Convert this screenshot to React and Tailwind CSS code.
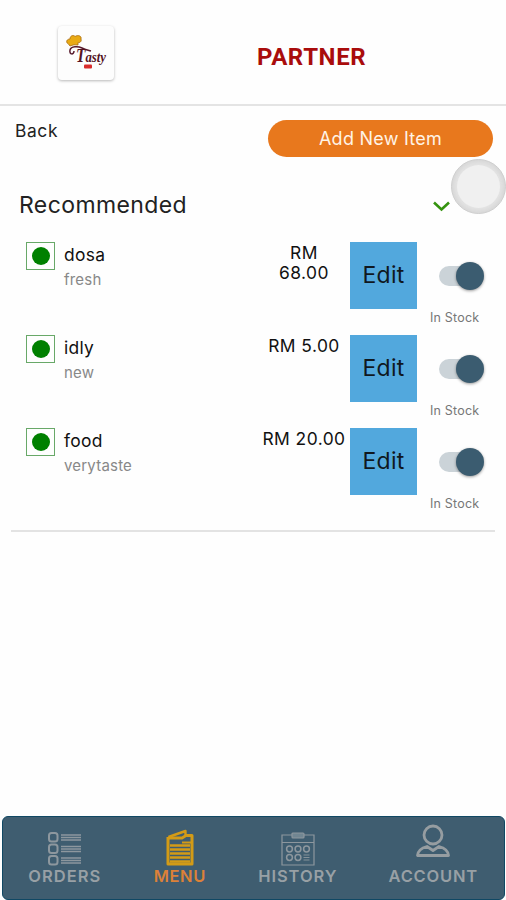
import React from "react";

const items = [
  { name: "dosa", note: "fresh", price: "RM 68.00", priceWidth: "w-[54px] mr-[19px]" },
  { name: "idly", note: "new", price: "RM 5.00", priceWidth: "w-[92px]" },
  { name: "food", note: "verytaste", price: "RM 20.00", priceWidth: "w-[92px]" },
];

function Logo() {
  return (
    <div className="ml-[58px] mt-[26px] h-[54px] w-[56px] rounded-[4px] bg-[#fdfdfd] shadow-[0_1px_3px_rgba(0,0,0,0.28)]">
      <svg viewBox="0 0 56 54" className="h-[54px] w-[56px]">
        <path d="M12 20 L10 17.500 C8 17 8 13 12 13 C12 9 16 9 17 10.500 C20 8.500 24 10 23 13 C24 16 21 17 20 16.500 L20 19 Q16 18 12 20 Z" fill="#e9aa13" stroke="#a8690e" strokeWidth="0.800" />
        <path d="M16 25 C16 29 11 29 12 24 C13 20 20 20 24 22 C28 24 30 24 33 25" fill="none" stroke="#571a2c" strokeWidth="1.500" />
        <text x="18" y="36" fontFamily="Liberation Serif, serif" fontSize="15" fontStyle="italic" fontWeight="700" fill="#55131f" textLength="30" lengthAdjust="spacingAndGlyphs"><tspan fontSize="18">T</tspan>asty</text>
        <rect x="26" y="38.500" width="8" height="4" rx="1" fill="#d92c2c" />
      </svg>
    </div>
  );
}

function Toggle() {
  return (
    <div className="flex h-[28px] w-[45px] items-center rounded-full">
      <div className="h-[20px] w-[32px] rounded-full bg-[#cbd3d8]" />
      <div className="-ml-[15px] h-[28px] w-[28px] shrink-0 rounded-full bg-[#3b5c70] shadow-[0_1px_3px_rgba(0,0,0,0.4)]" />
    </div>
  );
}

function Item({ item }) {
  return (
    <div className="flex h-[93px] items-start">
      <div className="ml-[26px] flex h-[28px] w-[29px] shrink-0 items-center justify-center border border-[#68a868]">
        <div className="h-[18px] w-[18px] rounded-full bg-[#008000]" />
      </div>
      <div className="ml-[9px] flex-1">
        <div className="mt-px h-[24px] text-[17.4px] leading-[24px] tracking-[0.3px] text-[#111]">{item.name}</div>
        <div className="mt-[3px] text-[15px] leading-[20px] tracking-[0.2px] text-[#888]">{item.note}</div>
      </div>
      <div className={`mt-px whitespace-normal text-center text-[17.4px] leading-[20px] tracking-[0.45px] text-[#111] ${item.priceWidth}`}>{item.price}</div>
      <div className="flex h-[67px] w-[67px] shrink-0 items-center justify-center bg-[#52a8dd] text-[23px] tracking-[0.2px] text-[#10181f]">Edit</div>
      <div className="w-[89px] pl-[13px] pt-[19.5px]">
        <div className="pl-[9px]"><Toggle /></div>
        <div className="mt-[19px] text-[12.5px] leading-[18px] tracking-[0.2px] text-[#777]">In Stock</div>
      </div>
    </div>
  );
}

function OrdersIcon() {
  return (
    <svg viewBox="0 0 34 34" className="h-[34px] w-[34px]" fill="none" stroke="#8d979e">
      {[1, 12.5, 24].map((y) => (
        <g key={y}>
          <rect x="1" y={y} width="8.500" height="8.500" rx="2.500" strokeWidth="2" />
          <path d={`M13 ${y + 2}h20M13 ${y + 4.5}h20M13 ${y + 7}h20`} strokeWidth="1.700" />
        </g>
      ))}
    </svg>
  );
}

function MenuIcon() {
  return (
    <svg viewBox="0 0 28 38" className="h-[38px] w-[28px]" fill="none" stroke="#d39b16">
      <path d="M2.500 9 L19.500 3 V8" strokeWidth="2.400" strokeLinejoin="round" />
      <path d="M20 7.500 H26 V36 H2 V9" strokeWidth="3" strokeLinejoin="round" />
      <path d="M2 10 H16 L20 7.500" strokeWidth="2.800" />
      <path d="M16 14.500 H25" strokeWidth="2" />
      <path d="M4 17.500 H24 M4 21.500 H24 M4 25.500 H24 M4 29.500 H24 M4 33.500 H24" strokeWidth="2.500" />
    </svg>
  );
}

function HistoryIcon() {
  return (
    <svg viewBox="0 0 34 34" className="h-[34px] w-[34px]" fill="none" stroke="#8d979e" strokeWidth="1.200">
      <path d="M11 3H1V33H33V3H23M1 10.500H33" />
      <rect x="11" y="1" width="12" height="5" rx="1" fill="#718692" />
      {[8.5, 17, 25.5].map((x) => <circle key={x} cx={x} cy="17" r="2.900" strokeWidth="1.500" />)}
      <circle cx="8.500" cy="25.500" r="2.900" strokeWidth="1.500" />
      <circle cx="17" cy="25.500" r="2.900" strokeWidth="1.500" />
      <path d="M22.500 23h6M22.500 25.500h6M22.500 28h6" strokeWidth="0.900" />
    </svg>
  );
}

function AccountIcon() {
  return (
    <svg viewBox="0 0 36 34" className="h-[34px] w-[36px]" fill="none" stroke="#969da1" strokeWidth="2.800" strokeLinejoin="round">
      <circle cx="18" cy="11" r="9" />
      <path d="M12 22.500 C6 24 3 26.500 2.500 31.500 H33.500 C33 26.500 30 24 24 22.500 L18 26.500 Z" />
    </svg>
  );
}

function Tab({ icon, label, width, text, iconOffset }) {
  return (
    <div className={`flex flex-col items-center ${width}`}>
      <div className={`flex h-[49px] items-end ${iconOffset}`}>{icon}</div>
      <div className={`whitespace-nowrap text-[16.5px] leading-[20px] ${text}`}>{label}</div>
    </div>
  );
}

export default function App() {
  return (
    <div className="flex h-[900px] w-[506px] flex-col overflow-hidden bg-[#fefefe] font-['Inter',sans-serif]">
      <header className="flex h-[106px] shrink-0 border-b-2 border-[#e4e4e4]">
        <Logo />
        <h1 className="ml-[143px] mt-[41px] font-['Roboto',sans-serif] text-[24px] font-bold leading-[32px] tracking-[0.6px] text-[#a90c0c]">PARTNER</h1>
      </header>

      <div className="flex h-[80px] shrink-0 justify-between pl-[15px] pr-[13px]">
        <div className="mt-[13px] text-[17.4px] leading-[24px] tracking-[0.6px] text-[#222]">Back</div>
        <button className="mt-[14px] flex h-[37px] w-[225px] items-center justify-center rounded-full bg-[#e8781d] text-[18px] tracking-[0.25px] text-[#fff3e6]">Add New Item</button>
      </div>

      <div className="relative flex h-[56px] shrink-0 items-start pl-[19px]">
        <h2 className="mt-[3px] w-[414px] text-[23px] leading-[32px] tracking-[0.4px] text-[#222]">Recommended</h2>
        <svg viewBox="0 0 17 11" className="mt-[15px] h-[11px] w-[17px]" fill="none" stroke="#35930f" strokeWidth="2.600">
          <path d="M1 1.500 L8.500 8.500 L16 1.500" />
        </svg>
        <div className="absolute -top-[27px] left-[451px] flex h-[55px] w-[55px] items-center justify-center rounded-full border border-[#cccccc] bg-[#d6d6d6]">
          <div className="h-[43px] w-[43px] rounded-full bg-[#f0f0f0] shadow-[0_0_4px_3px_#e4e4e4]" />
        </div>
      </div>

      <main className="h-[288px] shrink-0">
        {items.map((item) => <Item key={item.name} item={item} />)}
      </main>
      <div className="mx-[11px] h-[2px] shrink-0 bg-[#e3e3e3]" />

      <nav className="ml-[2px] mr-px mt-auto flex h-[84px] shrink-0 rounded-[6px] border border-[#104864] bg-[#3f5d70] font-semibold text-[#98a0a5]">
        <Tab icon={<OrdersIcon />} label="ORDERS" width="w-[124px]" text="tracking-[1px]" iconOffset="" />
        <Tab icon={<MenuIcon />} label="MENU" width="w-[107px]" text="tracking-[0.6px] text-[#dc8138]" iconOffset="" />
        <Tab icon={<HistoryIcon />} label="HISTORY" width="w-[130px]" text="tracking-[0.9px]" iconOffset="" />
        <Tab icon={<AccountIcon />} label="ACCOUNT" width="w-[142px]" text="tracking-[0.8px]" iconOffset="pb-[8px]" />
      </nav>
    </div>
  );
}
